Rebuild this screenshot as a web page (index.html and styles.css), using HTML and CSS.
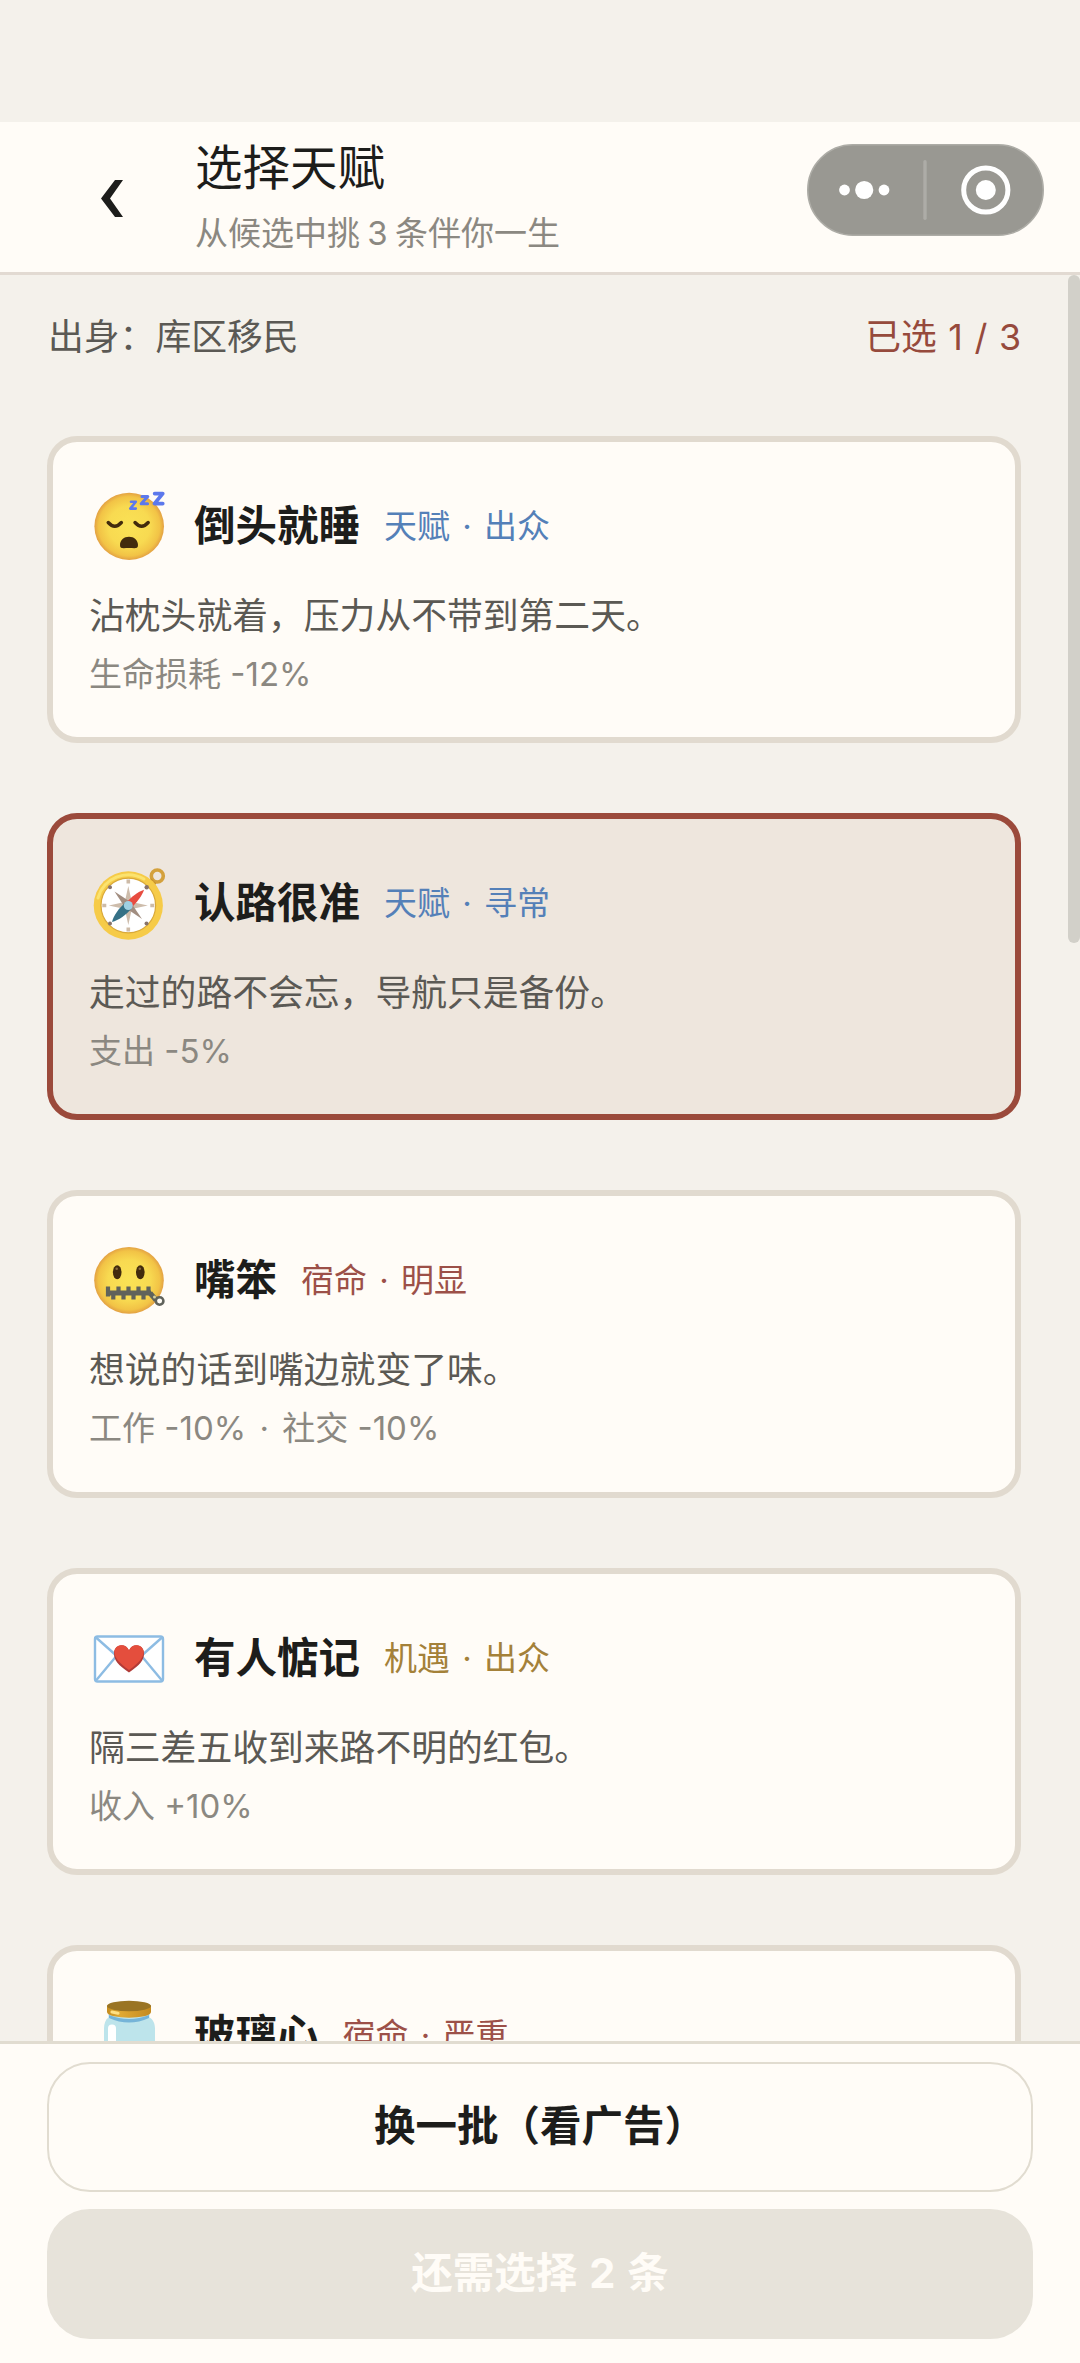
FILE: index.html
```html
<!DOCTYPE html>
<html lang="zh-CN">
<head>
<meta charset="utf-8">
<title>选择天赋</title>
<link rel="stylesheet" href="styles.css">
</head>
<body>
<svg class="defs" width="0" height="0" aria-hidden="true">
  <defs>
    <radialGradient id="face" cx="50%" cy="50%" r="50%">
      <stop offset="0" stop-color="#fae255"/>
      <stop offset=".6" stop-color="#f8da51"/>
      <stop offset=".88" stop-color="#f2c346"/>
      <stop offset="1" stop-color="#e3a143"/>
    </radialGradient>
    <linearGradient id="lid" x1="0" x2="1">
      <stop offset="0" stop-color="#c58c1f"/>
      <stop offset=".3" stop-color="#e0a933"/>
      <stop offset="1" stop-color="#c48a1f"/>
    </linearGradient>
  </defs>
</svg>
<div class="page">
  <header class="header">
    <svg class="back" viewBox="0 0 22 37"><path d="M14 0h8L9 18.5 22 37h-8L0 18.5z" fill="#1d1d1b"/></svg>
    <div class="heading">
      <h1 class="title">选择天赋</h1>
      <p class="subtitle">从候选中挑 3 条伴你一生</p>
    </div>
    <svg class="capsule" viewBox="0 0 237 92">
      <rect x=".75" y=".75" width="235.5" height="90.5" rx="45.2" fill="#999892" stroke="#adaca6" stroke-width="1.5"/>
      <rect x="116.3" y="16" width="3.4" height="60" rx="1.7" fill="#adaca7"/>
      <g fill="#fff"><circle cx="37.5" cy="46" r="5.4"/><circle cx="57.2" cy="46" r="9.1"/><circle cx="77" cy="46" r="5.4"/><circle cx="178.8" cy="46" r="10"/></g>
      <circle cx="178.8" cy="46" r="22.1" fill="none" stroke="#fff" stroke-width="5"/>
    </svg>
  </header>
  <main class="content">
    <div class="status"><span>出身：库区移民</span><span class="count">已选 1 / 3</span></div>
    <div class="list">
      <article class="card">
        <div class="card-head">
          <svg class="emoji" viewBox="0 0 110 110">
            <ellipse cx="49.2" cy="56.3" rx="34.8" ry="33.6" fill="url(#face)"/>
            <path d="M28.2 52.5q6.600 7.400 13.200 0M55 52.500q6.600 7.400 13.200 0" fill="none" stroke="#422b0d" stroke-width="3.400" stroke-linecap="round"/>
            <path d="M40 75c0-5 4-8.300 9-8.300s9 3.300 9 8.300c0 4.500-4 3-9 3s-9 1.500-9-3z" fill="#422b0d"/>
            <g fill="none" stroke="#5c78ec" stroke-linejoin="round" stroke-linecap="round">
              <path d="M51 31.800h4.800l-5.500 6.800h5.500" stroke-width="2.600"/>
              <path d="M62 26.600h5.800l-6.600 7.200h6.400" stroke-width="3"/>
              <path d="M74.700 23.600h8l-8.200 10h8.200" stroke-width="3.800"/>
            </g>
          </svg>
          <h2 class="name">倒头就睡</h2><span class="tag gift">天赋 · 出众</span>
        </div>
        <p class="desc">沾枕头就着，压力从不带到第二天。</p>
        <p class="effect">生命损耗 -12%</p>
      </article>
      <article class="card selected">
        <div class="card-head">
          <svg class="emoji" viewBox="0 -3 110 110">
            <circle cx="77.300" cy="26" r="6" fill="none" stroke="#d4a13c" stroke-width="3.600"/>
            <path d="M70 30l5 5" stroke="#c9922c" stroke-width="4"/>
            <ellipse cx="48.300" cy="55.500" rx="34.600" ry="34.200" fill="#f6cb48"/>
            <path d="M18 48a31.500 31.500 0 0 1 46-19" fill="none" stroke="#fbe36f" stroke-width="3" stroke-linecap="round"/>
            <circle cx="48.300" cy="55.500" r="27.300" fill="#fff" stroke="#d9a93a" stroke-width="1.200"/>
            <path d="M48.300 29.500v4M48.300 77.500v4M22.300 55.500h4M70.300 55.500h4" stroke="#cdbba8" stroke-width="3.600"/>
            <g fill="#88736a"><circle cx="30" cy="37.300" r="2"/><circle cx="66.700" cy="37.300" r="2.200"/><circle cx="30" cy="73.500" r="2"/><circle cx="66.500" cy="73.500" r="2"/></g>
            <path d="M48.300 36l3.500 16 16 3.500-16 3.500-3.500 16-3.500-16-16-3.500 16-3.500z" fill="#cdbcab"/>
            <path d="M34.500 41.500l16 10.500 11.500 17-17-11.500z" fill="#a18d80"/>
            <path d="M64 39.800c-6 2-13 7.500-18.500 13.500l5.500 5c6-6 11.500-13 13-18.500z" fill="#e74c40"/>
            <path d="M32 72c1.500-6.500 7-14 13.500-19.500l6 6C46.500 64.500 38.500 70.500 32 72z" fill="#357186"/>
            <circle cx="48.300" cy="55.500" r="4.500" fill="#9fd0e2"/>
          </svg>
          <h2 class="name">认路很准</h2><span class="tag gift">天赋 · 寻常</span>
        </div>
        <p class="desc">走过的路不会忘，导航只是备份。</p>
        <p class="effect">支出 -5%</p>
      </article>
      <article class="card">
        <div class="card-head">
          <svg class="emoji" viewBox="0 0 110 110">
            <ellipse cx="49" cy="56.300" rx="34.800" ry="33.400" fill="url(#face)"/>
            <ellipse cx="37.200" cy="48.300" rx="4.300" ry="7" fill="#422b0d"/><ellipse cx="60.300" cy="48.300" rx="4.300" ry="7" fill="#422b0d"/>
            <circle cx="36.700" cy="44.800" r="1.300" fill="#8a6a3e"/><circle cx="59.800" cy="44.800" r="1.300" fill="#8a6a3e"/>
            <path d="M26 69H71" stroke="#60625b" stroke-width="5"/>
            <path d="M28 62.500v10M38.500 62.500v7M48.500 62.500v7M58.500 62.500v7M68.500 62.500v8M33.300 69v6.500M43.500 69v6.500M53.500 69v6.500M63.500 69v6.500" stroke="#60625b" stroke-width="4.200"/>
            <path d="M70 69l6 7" stroke="#60625b" stroke-width="5"/>
            <circle cx="79.600" cy="77" r="3.800" fill="#fffcf6" stroke="#60625b" stroke-width="2.600"/>
            <circle cx="74.500" cy="73" r="1.500" fill="#d5cf9c"/>
          </svg>
          <h2 class="name">嘴笨</h2><span class="tag fate">宿命 · 明显</span>
        </div>
        <p class="desc">想说的话到嘴边就变了味。</p>
        <p class="effect">工作 -10% <span class="sep">·</span> 社交 -10%</p>
      </article>
      <article class="card">
        <div class="card-head">
          <svg class="emoji" viewBox="0 2 110 110">
            <rect x="15" y="36.500" width="68" height="45" rx="2.500" fill="#fff" stroke="#8dbce3" stroke-width="2.400"/>
            <path d="M16 37.500l27 24q6 4 12 0l27-24M16 80.500l20-24M82 80.500L62 56.500" fill="none" stroke="#8dbce3" stroke-width="2.400"/>
            <path d="M49 72.500C38 65 34 60 34 53.500c0-9.500 12-11 15-3 3-8 15-6.500 15 3C64 60 60 65 49 72.500z" fill="#b23b37"/>
            <path d="M49 70C39 63 35 58 34.300 52.500c0-8.500 11.700-10 14.700-2 3-8 14.700-6.500 14.700 2C63 58 59 63 49 70z" fill="#e44e3d"/>
          </svg>
          <h2 class="name">有人惦记</h2><span class="tag luck">机遇 · 出众</span>
        </div>
        <p class="desc">隔三差五收到来路不明的红包。</p>
        <p class="effect">收入 +10%</p>
      </article>
      <article class="card">
        <div class="card-head">
          <svg class="emoji" viewBox="0 .5 110 110">
            <path d="M28.500 34h41v5c3.500 2 5.500 6 5.500 11v35q0 7-7 7H31q-7 0-7-7V50c0-5 1.500-9 4.500-11z" fill="#bde4eb"/>
            <path d="M29 36.500q20 8 40 0v3q-20 9-40 0z" fill="#75b4d8"/>
            <path d="M27 27v6.500c0 7.500 44 7.500 44 0V27z" fill="url(#lid)"/>
            <ellipse cx="49" cy="27.500" rx="22" ry="5.200" fill="#9a7423"/>
            <path d="M32 33.500l6 1.200" stroke="#ffe083" stroke-width="3.200" stroke-linecap="round"/>
            <rect x="28" y="46" width="8" height="26" rx="4" fill="#fff"/>
          </svg>
          <h2 class="name">玻璃心</h2><span class="tag fate">宿命 · 严重</span>
        </div>
      </article>
    </div>
    <div class="scrollbar"></div>
  </main>
  <footer class="footer">
    <button class="btn outline">换一批（看广告）</button>
    <button class="btn disabled" disabled>还需选择 2 条</button>
  </footer>
</div>
</body>
</html>
```
FILE: styles.css
```css
* { box-sizing: border-box; }
body {
  margin: 0;
  background: #f4f1eb;
  font-family: Inter, "Noto Sans CJK SC", sans-serif;
}
h1, h2, p { margin: 0; }
.defs { display: block; }
.page {
  display: flex;
  flex-direction: column;
  width: 1080px;
  height: 2363px;
  padding-top: 122px;
  overflow: hidden;
}
.header {
  display: flex;
  align-items: flex-start;
  flex: none;
  height: 153px;
  padding: 22px 36px 0 101px;
  background: #fffcf7;
  border-bottom: 3px solid #e2dad2;
}
.back { width: 22px; height: 37px; margin-top: 36px; }
.heading { flex: 1; padding-left: 72px; }
.title {
  margin-top: -1px;
  font-size: 47.500px;
  font-weight: 400;
  line-height: 50px;
  color: #1d1d1b;
}
.subtitle {
  margin-top: 20px;
  font-size: 33px;
  line-height: 40px;
  word-spacing: -2px;
  color: #8b8881;
}
.capsule { flex: none; width: 237px; height: 92px; }
.content {
  position: relative;
  flex: 1;
  min-height: 0;
  padding: 40px 59px 0 47px;
  overflow: hidden;
}
.status {
  display: flex;
  justify-content: space-between;
  padding-left: 1px;
  font-size: 35.800px;
  line-height: 44px;
  color: #5b5954;
}
.count { word-spacing: 1.500px; color: #964a3c; }
.list { display: flex; flex-direction: column; gap: 70px; padding-top: 77px; }
.card {
  flex: none;
  height: 307.200px;
  padding: 28px 35px 28px 36px;
  border: 6px solid #e1dacf;
  border-radius: 30px;
  background: #fffcf7;
}
.card.selected { background: #eee6dd; border-color: #9b4a3b; }
.card-head { display: flex; align-items: center; height: 110px; }
.emoji { flex: none; width: 110px; height: 110px; margin-left: -9px; }
.name {
  margin-left: 4px;
  padding-top: 2px;
  font-size: 41.500px;
  font-weight: 700;
  line-height: 56px;
  color: #1d1d1b;
}
.tag {
  margin-left: 24px;
  padding-top: 2px;
  font-size: 33px;
  line-height: 46px;
  word-spacing: 3px;
}
.gift { color: #5480b8; }
.fate { color: #9c5048; }
.luck { color: #a48139; }
.desc { margin-top: 9px; font-size: 35.800px; line-height: 54px; color: #5b5954; }
.effect { margin-top: 6px; font-size: 33px; line-height: 50px; color: #8b8881; }
.sep { margin: 0 4px; }
.scrollbar {
  position: absolute;
  top: 0;
  right: 0;
  width: 12px;
  height: 668px;
  border-radius: 6px;
  background: #d2d0c9;
}
.footer {
  display: flex;
  flex: none;
  flex-direction: column;
  gap: 17px;
  height: 322px;
  padding: 18px 47px 0;
  background: #fffcf7;
  border-top: 3px solid #e1dcd0;
}
.btn {
  flex: none;
  height: 130px;
  padding: 0 0 3px;
  border: 2px solid #e1dcd0;
  border-radius: 43px;
  background: #fffcf7;
  color: #1d1d1b;
  font-family: inherit;
  font-size: 41.500px;
  font-weight: 700;
  line-height: 60px;
}
.btn.disabled {
  border-color: #e7e3da;
  background: #e7e3da;
  color: #fffcf7;
  word-spacing: 2px;
}
```
